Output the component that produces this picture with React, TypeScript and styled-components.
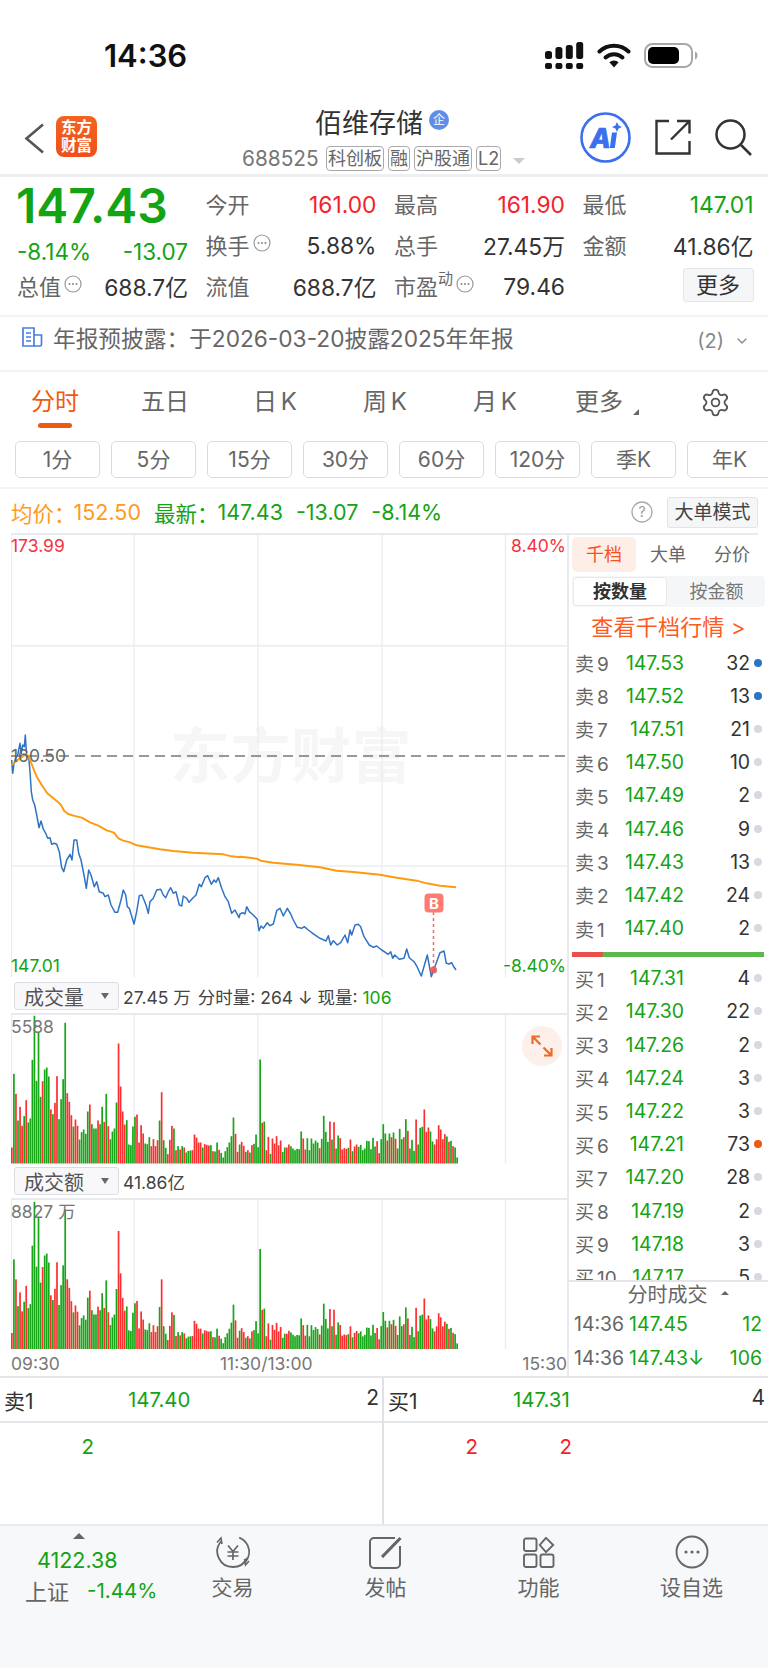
import React from "react";
import styled, { createGlobalStyle } from "styled-components";
import { Settings, ChevronDown } from "lucide-react";

const FONT = `"Inter", "Noto Sans CJK SC", sans-serif`;
const GREEN = "#14a314";
const RED = "#f5222d";
const ORANGE = "#ff9a1f";

const Global = createGlobalStyle`
  html, body { margin: 0; padding: 0; background: #fff; }
  body { width: 768px; height: 1669px; overflow: hidden; font-family: ${FONT}; color: #333; }
  * { box-sizing: border-box; }
`;

const Page = styled.div`
  width: 768px;
  height: 1669px;
  overflow: hidden;
  display: flex;
  flex-direction: column;
  background: #fff;
`;

/* ---------- status bar ---------- */
const StatusBar = styled.div`
  height: 100px;
  padding: 38px 70px 0 104px;
  display: flex;
  justify-content: space-between;
  align-items: flex-start;
`;
const Clock = styled.div`
  font-size: 31px;
  line-height: 36px;
  font-weight: 600;
  color: #111;
`;
const StatusIcons = styled.div`
  display: flex;
  align-items: center;
  gap: 13px;
  margin-top: 4px;
`;

/* ---------- header ---------- */
const Header = styled.header`
  height: 77px;
  border-bottom: 3px solid #eeeff1;
  display: flex;
  padding-left: 24px;
  position: relative;
`;
const BackLogo = styled.div`
  width: 219px;
  display: flex;
  align-items: flex-start;
  padding-top: 16px;
`;
const Logo = styled.div`
  width: 41px;
  height: 41px;
  margin-left: 12px;
  border-radius: 8px;
  background: linear-gradient(180deg, #f3641f, #ef4f1c);
  color: #fff;
  font-size: 15.5px;
  font-weight: 700;
  line-height: 18px;
  text-align: center;
  padding-top: 3px;
`;
const TitleBlock = styled.div`
  width: 300px;
  display: flex;
  flex-direction: column;
`;
const TitleLine = styled.div`
  height: 38px;
  padding: 5px 0 0 72px;
  display: flex;
  align-items: center;
  gap: 6px;
  font-size: 27px;
  color: #333;
`;
const CorpBadge = styled.span`
  width: 20px;
  height: 20px;
  border-radius: 50%;
  background: #5d8fe8;
  color: #fff;
  font-size: 12px;
  line-height: 20px;
  text-align: center;
  margin-top: -3px;
`;
const CodeLine = styled.div`
  display: flex;
  align-items: center;
  gap: 4px;
  margin-top: 8px;
`;
const Code = styled.span`
  font-size: 20.8px;
  color: #777;
  width: 80px;
  margin-left: -1px;
  flex: none;
`;
const Tag = styled.span`
  height: 25px;
  padding: 0 1px;
  min-width: 22px;
  border: 1px solid #aaa;
  border-radius: 4px;
  font-size: 18px;
  line-height: 23px;
  color: #666;
  text-align: center;
`;
const CaretDown = styled.span`
  width: 0;
  height: 0;
  margin-left: 8px;
  margin-top: 4px;
  border-left: 6px solid transparent;
  border-right: 6px solid transparent;
  border-top: 6px solid #ccc;
`;
const HeaderActions = styled.div`
  margin-left: auto;
  display: flex;
  align-items: flex-start;
  padding: 12px 16px 0 0;
  gap: 24px;
`;
const IconSlot = styled.div<{ $top?: number }>`
  margin-top: ${(p) => p.$top ?? 0}px;
  display: flex;
`;

/* ---------- quote ---------- */
const Quote = styled.section`
  height: 140px;
  padding: 6px 15px 0 17px;
  border-bottom: 2px solid #f4f4f5;
  display: grid;
  grid-template-columns: repeat(4, 171px);
  column-gap: 17.5px;
  grid-template-rows: 42px 41px 41px;
`;
const PriceBig = styled.div`
  font-size: 48px;
  font-weight: 600;
  color: ${GREEN};
  line-height: 46px;
  margin-left: -1px;
  white-space: nowrap;
`;
const ChangeRow = styled.div`
  display: flex;
  justify-content: space-between;
  align-items: center;
  font-size: 22.5px;
  color: ${GREEN};
  padding-top: 12px;
`;
const Stat = styled.div`
  display: flex;
  justify-content: space-between;
  align-items: center;
`;
const StatLabel = styled.span`
  display: inline-flex;
  align-items: center;
  font-size: 22px;
  color: #666;
  margin-top: -3px;
`;
const Sup = styled.sup`
  font-size: 15px;
  line-height: 1;
  margin-top: -14px;
  vertical-align: top;
`;
const StatValue = styled.span<{ $tone?: string }>`
  font-size: 22.8px;
  color: ${(p) => p.$tone ?? "#333"};
`;
const InfoDot = styled.svg`
  margin: -2px 0 0 3px;
`;
const MoreButton = styled.button`
  justify-self: end;
  align-self: start;
  width: 71px;
  height: 34px;
  margin-top: 2px;
  font: inherit;
  font-size: 22px;
  line-height: 30px;
  padding: 0;
  color: #333;
  background: #f5f6f8;
  border: 1px solid #e4e6ea;
  border-radius: 3px;
`;

/* ---------- notice ---------- */
const Notice = styled.div`
  height: 56px;
  padding: 0 18px 12px 22px;
  border-bottom: 2px solid #f4f4f5;
  display: flex;
  align-items: center;
  margin-top: -1px;
`;
const NoticeText = styled.div`
  margin-left: 10px;
  font-size: 22.7px;
  color: #666;
  flex: 1;
  white-space: nowrap;
`;
const NoticeCount = styled.span`
  font-size: 20px;
  color: #888;
  margin: 8px 10px 0 0;
`;
const NoticeChevron = styled.span`
  display: flex;
  margin-top: 8px;
`;

/* ---------- tabs ---------- */
const Tabs = styled.nav`
  height: 67px;
  display: grid;
  grid-template-columns: repeat(7, 110px);
`;
const Tab = styled.div<{ $active?: boolean; $shift?: number }>`
  display: flex;
  flex-direction: column;
  align-items: center;
  padding: 15px ${(p) => p.$shift ?? 0}px 0 0;
  font-size: 24px;
  line-height: 30px;
  word-spacing: -3px;
  color: ${(p) => (p.$active ? "#ee5a0f" : "#666")};
  position: relative;
`;
const TabUnderline = styled.span`
  width: 34px;
  height: 5px;
  margin-top: 6px;
  border-radius: 3px;
  background: #ee5a0f;
`;
const MoreTriangle = styled.span`
  position: absolute;
  right: 21px;
  top: 37px;
  width: 0;
  height: 0;
  border-left: 6px solid transparent;
  border-bottom: 6px solid #666;
`;

/* ---------- period row ---------- */
const PeriodRow = styled.div`
  height: 50px;
  padding: 2px 0 0 15px;
  display: flex;
  gap: 11px;
  overflow: hidden;
  border-bottom: 2px solid #f4f4f5;
`;
const PeriodButton = styled.div`
  flex: 0 0 85px;
  height: 37px;
  border: 1px solid #dcdcdc;
  border-radius: 5px;
  font-size: 21px;
  line-height: 35px;
  text-align: center;
  color: #666;
`;

/* ---------- legend ---------- */
const Legend = styled.div`
  height: 44px;
  padding: 2px 10px 0 11px;
  display: flex;
  align-items: center;
  font-size: 21.5px;
  white-space: nowrap;
`;
const LegendText = styled.span<{ $tone: string; $gap?: number }>`
  color: ${(p) => p.$tone};
  margin-left: ${(p) => p.$gap ?? 0}px;
`;
const ModeButton = styled.div`
  width: 91px;
  height: 31px;
  margin: 0 0 0 14px;
  background: #f5f6f8;
  border: 1px solid #e2e4e8;
  border-radius: 3px;
  font-size: 19px;
  line-height: 29px;
  text-align: center;
  color: #444;
`;
const Spacer = styled.div`
  flex: 1;
`;

/* ---------- main area ---------- */
const Main = styled.div`
  height: 845px;
  display: grid;
  grid-template-columns: 568px 200px;
  border-bottom: 2px solid #e4e6eb;
`;
const ChartColumn = styled.div`
  padding-left: 11px;
  display: flex;
  flex-direction: column;
`;
const ChartFrame = styled.div<{ $height: number }>`
  height: ${(p) => p.$height}px;
  position: relative;
  border-top: 2px solid #e8eaee;
  flex: none;
`;
const ChartSvg = styled.svg`
  display: block;
  position: absolute;
  left: 0;
  top: 0;
`;
const Watermark = styled.div`
  position: absolute;
  left: 159px;
  top: 186px;
  font-size: 60px;
  line-height: 70px;
  font-weight: 700;
  color: #f6f6f7;
  white-space: nowrap;
  letter-spacing: 0.5px;
`;
const AxisLabel = styled.span<{ $tone: string; $right?: number; $left?: number; $top: number }>`
  position: absolute;
  top: ${(p) => p.$top}px;
  ${(p) => (p.$right !== undefined ? `right: ${p.$right}px;` : `left: ${p.$left ?? 0}px;`)}
  font-size: 17.5px;
  line-height: 22px;
  color: ${(p) => p.$tone};
`;
const SubHeader = styled.div`
  height: 34px;
  flex: none;
  margin-left: -11px;
  padding-left: 14px;
  display: flex;
  align-items: center;
  font-size: 17.5px;
  color: #444;
`;
const Selector = styled.div`
  width: 105px;
  height: 28px;
  padding: 0 9px;
  display: flex;
  align-items: center;
  justify-content: space-between;
  background: #f8f8fa;
  border: 1px solid #dcdde2;
  border-radius: 3px;
  font-size: 20px;
  color: #555;
  margin-right: 4px;
`;
const SelectorCaret = styled.span`
  width: 0;
  height: 0;
  border-left: 4px solid transparent;
  border-right: 4px solid transparent;
  border-top: 6px solid #666;
`;
const SubInfo = styled.span`
  margin-left: 7px;
  white-space: nowrap;
`;
const GreenNum = styled.span`
  color: ${GREEN};
`;
const ExpandBadge = styled.div`
  position: absolute;
  left: 511px;
  top: 11px;
  width: 40px;
  height: 40px;
  border-radius: 50%;
  background: #fdf0ea;
  display: flex;
  align-items: center;
  justify-content: center;
`;
const TimeAxis = styled.div`
  flex: 1;
  display: grid;
  grid-template-columns: 209px 1fr auto;
  align-items: center;
  padding-right: 1px;
  font-size: 17.5px;
  color: #777;
`;

/* ---------- order book ---------- */
const BookColumn = styled.aside`
  border-left: 2px solid #e8eaee;
  margin-left: -1px;
  display: flex;
  flex-direction: column;
  position: relative;
  padding-top: 4px;
`;
const BookTop = styled.div`
  position: absolute;
  left: 0;
  top: 0;
  width: 189px;
  height: 2px;
  background: #e8eaee;
`;
const BookTabs = styled.div`
  height: 35px;
  padding-left: 3px;
  display: grid;
  grid-template-columns: 64px 64px 64px;
  font-size: 18px;
  line-height: 35px;
  text-align: center;
  color: #666;
`;
const BookTab = styled.div<{ $active?: boolean }>`
  border-radius: 5px;
  background: ${(p) => (p.$active ? "#fdeee8" : "transparent")};
  color: ${(p) => (p.$active ? "#f4511e" : "#666")};
`;
const Segment = styled.div`
  margin: 4px 3px 0;
  height: 31px;
  border-radius: 4px;
  background: #f5f6f8;
  display: grid;
  grid-template-columns: 96px 1fr;
  font-size: 18px;
  line-height: 29px;
  text-align: center;
`;
const SegmentItem = styled.div<{ $active?: boolean }>`
  margin: 1px;
  border-radius: 4px;
  background: ${(p) => (p.$active ? "#fff" : "transparent")};
  border: ${(p) => (p.$active ? "1px solid #e8e9ec" : "0")};
  color: ${(p) => (p.$active ? "#333" : "#777")};
  font-weight: ${(p) => (p.$active ? 700 : 400)};
  line-height: ${(p) => (p.$active ? 27 : 29)}px;
`;
const DeepLink = styled.div`
  height: 39px;
  padding-top: 1px;
  font-size: 22px;
  line-height: 39px;
  text-align: center;
  color: #ff5a1f;
  letter-spacing: 0.2px;
`;
const BookScroll = styled.div`
  height: 634px;
  overflow: hidden;
  flex: none;
`;
const BookRow = styled.div`
  height: 33.2px;
  padding-left: 6px;
  display: grid;
  grid-template-columns: 45px 64px 66px 8px;
  align-items: center;
  font-size: 19.4px;
`;
const BookLabel = styled.span`
  color: #666;
  font-size: 19px;
  white-space: nowrap;
`;
const BookNum = styled.span`
  margin-left: 3px;
`;
const BookPrice = styled.span`
  color: ${GREEN};
  text-align: right;
  margin-left: -6px;
`;
const BookQty = styled.span`
  color: #333;
  text-align: right;
`;
const BookDot = styled.span<{ $tone: string }>`
  width: 8px;
  height: 8px;
  margin-left: 4px;
  border-radius: 50%;
  background: ${(p) => p.$tone};
`;
const RatioBar = styled.div`
  height: 5px;
  margin: 7px 4px 5px 3px;
  background: linear-gradient(100deg, #e85050 0 16%, #5cb94e 16.4% 100%);
`;
const TradesHead = styled.div`
  height: 27px;
  border-top: 2px solid #e4e6eb;
  margin-left: -1px;
  display: flex;
  align-items: center;
  justify-content: center;
  font-size: 20px;
  color: #666;
  gap: 13px;
  padding: 0 0 3px 20px;
  flex: none;
`;
const SmallUp = styled.span`
  width: 0;
  height: 0;
  border-left: 4px solid transparent;
  border-right: 4px solid transparent;
  border-bottom: 4px solid #666;
`;
const TradeRow = styled.div`
  height: 34px;
  padding: 0 6px 0 5px;
  display: flex;
  align-items: center;
  font-size: 19.4px;
  color: ${GREEN};
  flex: none;
`;
const TradeTime = styled.span`
  width: 55px;
  color: #666;
`;
const TradeQty = styled.span`
  margin-left: auto;
`;

/* ---------- depth summary ---------- */
const Depth = styled.div`
  height: 146px;
  display: grid;
  grid-template-columns: 384px 384px;
  flex: none;
`;
const DepthColumn = styled.div<{ $divider?: boolean }>`
  border-right: ${(p) => (p.$divider ? "2px solid #dfe1e6" : "0")};
  display: flex;
  flex-direction: column;
`;
const DepthHead = styled.div`
  height: 45px;
  flex: none;
  border-bottom: 2px solid #e4e6eb;
  display: flex;
  align-items: center;
  padding: 0 3px 0 4px;
  font-size: 20.4px;
  color: #333;
`;
const DepthLabel = styled.span<{ $width: number }>`
  width: ${(p) => p.$width}px;
  font-size: 21px;
`;
const DepthPrice = styled.span`
  color: ${GREEN};
`;
const DepthQty = styled.span`
  margin: -4px 0 0 auto;
  font-size: 21px;
`;
const DepthCells = styled.div`
  display: grid;
  grid-template-columns: repeat(4, 94px);
  font-size: 20.5px;
  line-height: 48px;
  text-align: right;
`;
const DepthCell = styled.span<{ $tone: string }>`
  color: ${(p) => p.$tone};
`;

/* ---------- footer ---------- */
const Footer = styled.footer`
  height: 144px;
  flex: none;
  background: #f7f8fa;
  border-top: 2px solid #e9eaed;
  display: grid;
  grid-template-columns: 156px repeat(4, 153px);
`;
const IndexBox = styled.div`
  display: flex;
  flex-direction: column;
  align-items: flex-start;
  padding: 7px 0 0 25px;
`;
const IndexCaret = styled.span`
  width: 0;
  height: 0;
  margin-left: 48px;
  border-left: 6px solid transparent;
  border-right: 6px solid transparent;
  border-bottom: 6px solid #666;
`;
const IndexValue = styled.div`
  font-size: 21.5px;
  line-height: 30px;
  margin: 6px 0 0 12px;
  color: ${GREEN};
`;
const IndexLine = styled.div`
  display: flex;
  align-items: center;
  gap: 18px;
  font-size: 22px;
  color: #666;
  height: 30px;
  white-space: nowrap;
`;
const IndexChange = styled.span`
  color: ${GREEN};
  font-size: 20.5px;
`;
const FootItem = styled.div`
  display: flex;
  flex-direction: column;
  align-items: center;
  padding-top: 9px;
  font-size: 21px;
  color: #666;
`;
const FootIconBox = styled.div`
  height: 34px;
  display: flex;
  align-items: center;
`;
const FootLabel = styled.span`
  margin-top: 4px;
  line-height: 30px;
`;

/* ---------- data ---------- */
const conv = (pts: number[][], ox: number, oy: number) => pts.map(([a, b]) => [ox + a / 3, oy + b / 3]);
const toPath = (pts: number[][]) => pts.map((p, i) => `${i ? "L" : "M"}${p[0].toFixed(1)} ${p[1].toFixed(1)}`).join("");

const blue = [
  ...conv([[5,105],[8,145],[12,115],[17,100],[23,90],[30,55],[34,85],[38,60],[43,65],[46,30],[50,95],[56,95],[60,140],[64,200],[68,225],[74,240],[80,270],[87,308],[93,288],[100,312],[107,325],[113,340],[120,338],[125,358],[133,355],[140,358],[148,380],[155,428],[161,440],[170,405],[180,388],[186,405],[192,345],[200,345],[206,385],[213,405],[222,450],[229,490],[236,435],[243,450],[253,485],[260,470],[268,500],[280,505],[285,515],[295,510],[303,540],[315,562],[323,562],[333,525],[340,495],[347,510],[352,545],[358,550],[372,597],[380,560],[388,512],[396,510],[408,540],[415,565],[420,530],[430,520],[440,495],[452,493],[460,510],[467,518],[475,500],[482,488],[490,505],[498,500],[508,540],[515,543],[520,513],[530,520],[537,532],[548,520],[558,510],[568,478],[574,485],[585,458],[593,452],[604,478],[612,465],[618,472],[625,458],[635,490],[645,515],[655,530],[665,565],[675,555],[687,578]], 10, 725),
  ...conv([[0,222],[8,218],[15,222],[20,200],[28,215],[40,225],[52,238],[57,272],[63,258],[70,265],[82,248],[90,257],[100,252],[110,212],[120,205],[130,228],[142,205],[152,222],[160,240],[172,262],[185,265],[193,260],[205,270],[218,280],[232,290],[240,295],[258,303],[265,287],[272,315],[280,302],[292,315],[302,308],[315,285],[323,308],[330,270],[335,285],[345,255],[355,253],[362,260],[372,290],[388,315],[400,322],[410,318],[425,330],[445,343],[452,335],[458,355],[464,345],[478,358],[492,355],[500,327],[508,353],[522,365],[530,378],[544,408],[562,345],[574,410],[590,365],[600,338],[612,333],[619,370],[627,372],[635,368],[640,378],[648,390]], 240, 840),
];
const orange = [
  ...conv([[5,120],[15,112],[30,100],[45,90],[55,92],[62,110],[70,130],[80,155],[95,180],[112,205],[130,220],[145,232],[153,240],[163,258],[175,267],[190,272],[215,278],[240,292],[265,302],[290,316],[312,323],[325,340],[340,347],[360,352],[380,361],[410,366],[450,373],[490,378],[550,383],[640,388],[665,394],[690,397]], 10, 725),
  ...conv([[0,50],[30,53],[50,56],[62,62],[100,68],[170,74],[240,82],[290,92],[340,96],[420,104],[470,113],[530,122],[560,130],[600,137],[648,142]], 240, 840),
];

const barSpec =
  "r397 g176 r236 g316 r275 r332 g303 r255 g322 g310 g134 g2 g197 g50 g245 r198 g163 g157 g184 r283 g297 r263 r183 g312 g252 g192 g23 r234 r260 r300 g334 r313 r332 g373 g351 g343 g356 g289 r268 g327 g340 g340 r316 g327 g275 r320 g236 r333 g372 g349 g340 g262 r85 r214 r289 r328 g315 g388 g390 g334 g305 r298 r382 r330 r355 g385 g387 g366 r393 r372 r393 r375 g316 r231 g375 g398 r417 r374 r332 g340 r405 g393 r403 g393 r397 g412 g407 g406 r405 r358 r367 r382 r382 g397 r387 r389 r391 g390 r408 g409 g382 r404 g413 g427 g408 g396 g382 g363 g307 r356 r410 g388 " +
  "r380 r392 g410 r405 g412 r390 g386 g358 g396 g133 r323 g319 r405 r365 g416 r370 r385 r363 r390 r376 g410 g397 r397 r388 g393 g400 g405 g401 g402 g349 r370 r403 g369 g405 g370 g385 g376 g382 r399 g371 g302 g350 g380 r319 g373 r321 g400 g361 r369 r403 r399 r401 g398 r373 g408 r394 r388 g395 g389 g405 g400 g377 g378 g402 g368 g394 r378 r414 g372 g327 g355 r376 g355 r366 g352 r371 g400 g341 g372 r366 g312 r347 g400 g374 g407 r313 g388 g338 g335 r283 r350 r337 g349 g379 r388 r372 r330 r343 r372 r357 g364 r380 g377 r393 g397 g427";
const bars = barSpec.split(" ").map((s) => ({ red: s[0] === "r", h: (445 - Number(s.slice(1))) / 3 }));
const pitch = (457 - 11.7) / (bars.length - 1);

const vGrid = [134, 258, 382, 505.5];

const sells = [
  ["9", "147.53", "32", "#2f74c4"],
  ["8", "147.52", "13", "#2f74c4"],
  ["7", "147.51", "21", "#d6d9e0"],
  ["6", "147.50", "10", "#d6d9e0"],
  ["5", "147.49", "2", "#d6d9e0"],
  ["4", "147.46", "9", "#d6d9e0"],
  ["3", "147.43", "13", "#d6d9e0"],
  ["2", "147.42", "24", "#d6d9e0"],
  ["1", "147.40", "2", "#d6d9e0"],
];
const buys = [
  ["1", "147.31", "4", "#d6d9e0"],
  ["2", "147.30", "22", "#d6d9e0"],
  ["3", "147.26", "2", "#d6d9e0"],
  ["4", "147.24", "3", "#d6d9e0"],
  ["5", "147.22", "3", "#d6d9e0"],
  ["6", "147.21", "73", "#ee5a0f"],
  ["7", "147.20", "28", "#d6d9e0"],
  ["8", "147.19", "2", "#d6d9e0"],
  ["9", "147.18", "3", "#d6d9e0"],
  ["10", "147.17", "5", "#d6d9e0"],
];

/* ---------- drawings ---------- */
const SignalIcon = () => (
  <svg width="39" height="27" viewBox="0 0 39 27">
    {[0, 10.4, 20.8, 31.2].map((x, i) => (
      <g key={x} fill="#111">
        <rect x={x} y={21} width="7" height="6" rx="2" />
        <rect x={x} y={[9, 5, 3, 0][i]} width="7" height={[8, 12, 14, 17][i]} rx="2.5" />
      </g>
    ))}
  </svg>
);
const WifiIcon = () => (
  <svg width="34" height="25" viewBox="0 0 34 25" fill="none" stroke="#111" strokeWidth="4" strokeLinecap="round">
    <path d="M2.5 8.5a21 21 0 0 1 29 0" />
    <path d="M8.5 14.5a12.5 12.5 0 0 1 17 0" />
    <path d="M17 24.5l-4.6-5.2a6.8 6.8 0 0 1 9.2 0z" fill="#111" stroke="none" />
  </svg>
);
const BatteryIcon = () => (
  <svg width="54" height="25" viewBox="0 0 54 25">
    <rect x="1" y="1" width="47" height="23" rx="7.5" fill="none" stroke="#a8a8a8" strokeWidth="2" />
    <rect x="4" y="4" width="31" height="17" rx="5" fill="#000" />
    <path d="M51 8.5c1.6.5 2.5 2 2.5 4s-.9 3.5-2.5 4z" fill="#a8a8a8" />
  </svg>
);
const BackIcon = () => (
  <svg width="20" height="31" viewBox="0 0 20 31" fill="none" stroke="#555" strokeWidth="2.6">
    <path d="M19 1.5L2.5 15.5L19 29.5" />
  </svg>
);
const AiIcon = () => (
  <svg width="51" height="51" viewBox="0 0 51 51">
    <circle cx="25.5" cy="25.5" r="24" fill="#fff" stroke="#3a6ff0" strokeWidth="2.6" />
    <text x="10" y="36" fontFamily="Inter" fontSize="27" fontWeight="800" fontStyle="italic" fill="#3a6ff0" stroke="#3a6ff0" strokeWidth="0.7">
      A
    </text>
    <path d="M32 20.5h5l-2.2 15.5h-5z" fill="#3a6ff0" />
    <path d="M37 10l1.6 3.4 3.4 1.6-3.4 1.6-1.6 3.4-1.6-3.4-3.4-1.6 3.4-1.6z" fill="#3a6ff0" />
  </svg>
);
const ShareIcon = () => (
  <svg width="36" height="36" viewBox="0 0 36 36" fill="none" stroke="#333" strokeWidth="2.4">
    <path d="M14 2H1.5v32.5h33V22" />
    <path d="M16 20.5L34 2.5M22 2h12.5v12.5" />
  </svg>
);
const SearchIcon = () => (
  <svg width="37" height="37" viewBox="0 0 37 37" fill="none" stroke="#333" strokeWidth="2.5">
    <circle cx="15.5" cy="15.5" r="14" />
    <path d="M26 26l10 10" />
  </svg>
);
const Dots = ({ size = 18 }: { size?: number }) => (
  <InfoDot width={size} height={size} viewBox="0 0 18 18">
    <circle cx="9" cy="9" r="8" fill="none" stroke="#999" strokeWidth="1.2" />
    <circle cx="5.5" cy="9" r="1" fill="#888" />
    <circle cx="9" cy="9" r="1" fill="#888" />
    <circle cx="12.5" cy="9" r="1" fill="#888" />
  </InfoDot>
);
const DocIcon = () => (
  <svg width="21" height="20" viewBox="0 0 21 20" fill="none" stroke="#4a7fe0" strokeWidth="1.7">
    <path d="M1 1h11v18H1z" />
    <path d="M12 8h7.5v9.5a1.5 1.5 0 0 1-1.5 1.5h-6" />
    <path d="M4 6h5M4 10h5M4 14h5" strokeWidth="1.5" />
  </svg>
);
const HelpIcon = () => (
  <svg width="22" height="22" viewBox="0 0 22 22" fill="none">
    <circle cx="11" cy="11" r="10" stroke="#aaa" strokeWidth="1.3" />
    <text x="11" y="16" textAnchor="middle" fontFamily="Inter" fontSize="14" fill="#999">?</text>
  </svg>
);
const ExpandIcon = () => (
  <svg width="22" height="22" viewBox="0 0 22 22" fill="none" stroke="#f06a25" strokeWidth="2.2">
    <path d="M1.5 9V1.5H9M2 2l7.5 7.5" />
    <path d="M20.5 13v7.5H13M20 20l-7.5-7.5" />
  </svg>
);
const TradeIcon = () => (
  <svg width="38" height="34" viewBox="0 0 38 34" fill="none" stroke="#666" strokeWidth="1.8">
    <path d="M7 6.5A15.5 15.5 0 0 0 19 32a15.5 15.5 0 0 0 14-9" />
    <path d="M31 27.5A15.5 15.5 0 0 0 19 1.5a15.5 15.5 0 0 0-11 4.5" strokeDasharray="30 60" />
    <path d="M3 7.5L7 3l1 6M35 26l-3.5 4-1-6" strokeWidth="1.6" />
    <path d="M14 10.5l5 6 5-6M13.5 17h11M13.5 21h11M19 16.5V25" strokeWidth="1.7" />
  </svg>
);
const PostIcon = () => (
  <svg width="33" height="33" viewBox="0 0 33 33" fill="none" stroke="#666" strokeWidth="2">
    <path d="M26 2H5a4 4 0 0 0-4 4v22a4 4 0 0 0 4 4h22a4 4 0 0 0 4-4V10" />
    <path d="M31.5 2L14 20l-1 1" strokeWidth="3.2" />
  </svg>
);
const FuncIcon = () => (
  <svg width="32" height="31" viewBox="0 0 32 31" fill="none" stroke="#666" strokeWidth="1.9">
    <rect x="1" y="1.5" width="12.5" height="12.5" rx="2" />
    <rect x="1" y="17.5" width="12.5" height="12.5" rx="2" />
    <rect x="17.5" y="17.5" width="13" height="12.5" rx="2" />
    <path d="M23 .8l7.2 7.2-7.2 7.2L16.8 8z" />
  </svg>
);
const WatchIcon = () => (
  <svg width="34" height="34" viewBox="0 0 34 34" fill="none">
    <circle cx="17" cy="17" r="15.5" stroke="#666" strokeWidth="1.9" />
    <circle cx="11" cy="17" r="1.6" fill="#666" />
    <circle cx="17" cy="17" r="1.6" fill="#666" />
    <circle cx="23" cy="17" r="1.6" fill="#666" />
  </svg>
);

const GridLines = ({ y0, y1 }: { y0: number; y1: number }) => (
  <g stroke="#eaecf2" strokeWidth="1.3">
    <line x1={11.5} x2={11.5} y1={y0} y2={y1} />
    {vGrid.map((x) => (
      <line key={x} x1={x} x2={x} y1={y0} y2={y1} />
    ))}
  </g>
);

const Bars = ({ base, decay }: { base: number; decay: number }) => (
  <g>
    {bars.map((b, i) => {
      const h = b.h * (1 - (decay * i) / bars.length);
      return (
        <rect
          key={i}
          x={11 + i * pitch}
          y={base - h}
          width={1.7}
          height={h}
          fill={b.red ? "#fb2f2f" : "#18a618"}
        />
      );
    })}
  </g>
);

const Book = ({ kind, rows }: { kind: string; rows: string[][] }) => (
  <>
    {rows.map((r) => (
      <BookRow key={r[0]}>
        <BookLabel>
          {kind}
          <BookNum>{r[0]}</BookNum>
        </BookLabel>
        <BookPrice>{r[1]}</BookPrice>
        <BookQty>{r[2]}</BookQty>
        <BookDot $tone={r[3]} />
      </BookRow>
    ))}
  </>
);

export default function App() {
  return (
    <Page>
      <Global />
      <StatusBar>
        <Clock>14:36</Clock>
        <StatusIcons>
          <SignalIcon />
          <WifiIcon />
          <BatteryIcon />
        </StatusIcons>
      </StatusBar>

      <Header>
        <BackLogo>
          <IconSlot $top={7}>
            <BackIcon />
          </IconSlot>
          <Logo>
            东方
            <br />
            财富
          </Logo>
        </BackLogo>
        <TitleBlock>
          <TitleLine>
            佰维存储
            <CorpBadge>企</CorpBadge>
          </TitleLine>
          <CodeLine>
            <Code>688525</Code>
            <Tag>科创板</Tag>
            <Tag>融</Tag>
            <Tag>沪股通</Tag>
            <Tag>L2</Tag>
            <CaretDown />
          </CodeLine>
        </TitleBlock>
        <HeaderActions>
          <AiIcon />
          <IconSlot $top={7}>
            <ShareIcon />
          </IconSlot>
          <IconSlot $top={7}>
            <SearchIcon />
          </IconSlot>
        </HeaderActions>
      </Header>

      <Quote>
        <PriceBig>147.43</PriceBig>
        <Stat>
          <StatLabel>今开</StatLabel>
          <StatValue $tone={RED}>161.00</StatValue>
        </Stat>
        <Stat>
          <StatLabel>最高</StatLabel>
          <StatValue $tone={RED}>161.90</StatValue>
        </Stat>
        <Stat>
          <StatLabel>最低</StatLabel>
          <StatValue $tone={GREEN}>147.01</StatValue>
        </Stat>
        <ChangeRow>
          <span>-8.14%</span>
          <span>-13.07</span>
        </ChangeRow>
        <Stat>
          <StatLabel>
            换手
            <Dots />
          </StatLabel>
          <StatValue>5.88%</StatValue>
        </Stat>
        <Stat>
          <StatLabel>总手</StatLabel>
          <StatValue>27.45万</StatValue>
        </Stat>
        <Stat>
          <StatLabel>金额</StatLabel>
          <StatValue>41.86亿</StatValue>
        </Stat>
        <Stat>
          <StatLabel>
            总值
            <Dots />
          </StatLabel>
          <StatValue>688.7亿</StatValue>
        </Stat>
        <Stat>
          <StatLabel>流值</StatLabel>
          <StatValue>688.7亿</StatValue>
        </Stat>
        <Stat>
          <StatLabel>
            市盈<Sup>动</Sup>
            <Dots />
          </StatLabel>
          <StatValue>79.46</StatValue>
        </Stat>
        <MoreButton>更多</MoreButton>
      </Quote>

      <Notice>
        <DocIcon />
        <NoticeText>年报预披露：于2026-03-20披露2025年年报</NoticeText>
        <NoticeCount>(2)</NoticeCount>
        <NoticeChevron>
          <ChevronDown size={16} color="#888" />
        </NoticeChevron>
      </Notice>

      <Tabs>
        <Tab $active>
          分时
          <TabUnderline />
        </Tab>
        <Tab>五日</Tab>
        <Tab>日 K</Tab>
        <Tab>周 K</Tab>
        <Tab>月 K</Tab>
        <Tab $shift={12}>
          更多
          <MoreTriangle />
        </Tab>
        <Tab>
          <Settings size={31} color="#555" strokeWidth={1.4} />
        </Tab>
      </Tabs>

      <PeriodRow>
        {["1分", "5分", "15分", "30分", "60分", "120分", "季K", "年K"].map((t) => (
          <PeriodButton key={t}>{t}</PeriodButton>
        ))}
      </PeriodRow>

      <Legend>
        <LegendText $tone={ORANGE}>均价：</LegendText>
        <LegendText $tone={ORANGE} $gap={-2}>152.50</LegendText>
        <LegendText $tone={GREEN} $gap={13}>最新：</LegendText>
        <LegendText $tone={GREEN} $gap={-1}>147.43</LegendText>
        <LegendText $tone={GREEN} $gap={13}>-13.07</LegendText>
        <LegendText $tone={GREEN} $gap={13}>-8.14%</LegendText>
        <Spacer />
        <HelpIcon />
        <ModeButton>大单模式</ModeButton>
      </Legend>

      <Main>
        <ChartColumn>
          <ChartFrame $height={446}>
            <Watermark>东方财富</Watermark>
            <ChartSvg width={557} height={444} viewBox="11 535 557 444">
              <GridLines y0={535} y1={977} />
              <g stroke="#eaecf2" strokeWidth="1.4">
                <line x1={11} x2={568} y1={645.7} y2={645.7} />
                <line x1={11} x2={568} y1={866} y2={866} />
              </g>
              <line x1={11} x2={568} y1={756} y2={756} stroke="#777" strokeWidth="1.6" strokeDasharray="10 6" />
              <path d={toPath(blue)} fill="none" stroke="#2f74c4" strokeWidth="1.5" strokeLinejoin="round" />
              <path d={toPath(orange)} fill="none" stroke="#ff9a0f" strokeWidth="1.9" strokeLinejoin="round" />
              <line x1={433.5} x2={433.5} y1={912} y2={968} stroke="#f46a6a" strokeWidth="1.5" strokeDasharray="3 3" />
              <circle cx={433.5} cy={970} r={3.6} fill="#e85a5a" opacity="0.9" />
              <rect x={424.5} y={893.5} width={19} height={19} rx={4} fill="#ff7b72" />
              <text x={434} y={909} textAnchor="middle" fontFamily="Inter" fontSize="15" fontWeight="700" fill="#fff">
                B
              </text>
            </ChartSvg>
            <AxisLabel $tone="#f5333f" $left={0} $top={0}>173.99</AxisLabel>
            <AxisLabel $tone="#f5333f" $right={2} $top={0}>8.40%</AxisLabel>
            <AxisLabel $tone="#666" $left={0} $top={210}>160.50</AxisLabel>
            <AxisLabel $tone={GREEN} $left={0} $top={420}>147.01</AxisLabel>
            <AxisLabel $tone={GREEN} $right={2} $top={420}>-8.40%</AxisLabel>
          </ChartFrame>

          <SubHeader>
            <Selector>
              成交量
              <SelectorCaret />
            </Selector>
            27.45 万
            <SubInfo>分时量: 264 ↓ 现量: <GreenNum>106</GreenNum></SubInfo>
          </SubHeader>
          <ChartFrame $height={151}>
            <ChartSvg width={557} height={149} viewBox="11 1015 557 149">
              <GridLines y0={1015} y1={1163.5} />
              <Bars base={1163.5} decay={0} />
            </ChartSvg>
            <AxisLabel $tone="#777" $left={0} $top={1}>5588</AxisLabel>
            <ExpandBadge>
              <ExpandIcon />
            </ExpandBadge>
          </ChartFrame>

          <SubHeader>
            <Selector>
              成交额
              <SelectorCaret />
            </Selector>
            41.86亿
          </SubHeader>
          <ChartFrame $height={152}>
            <ChartSvg width={557} height={150} viewBox="11 1200 557 150">
              <GridLines y0={1200} y1={1349} />
              <Bars base={1349} decay={0.07} />
            </ChartSvg>
            <AxisLabel $tone="#777" $left={0} $top={1}>8827 万</AxisLabel>
          </ChartFrame>
          <TimeAxis>
            <span>09:30</span>
            <span>11:30/13:00</span>
            <span>15:30</span>
          </TimeAxis>
        </ChartColumn>

        <BookColumn>
          <BookTop />
          <BookTabs>
            <BookTab $active>千档</BookTab>
            <BookTab>大单</BookTab>
            <BookTab>分价</BookTab>
          </BookTabs>
          <Segment>
            <SegmentItem $active>按数量</SegmentItem>
            <SegmentItem>按金额</SegmentItem>
          </Segment>
          <DeepLink>查看千档行情 &gt;</DeepLink>
          <BookScroll>
            <Book kind="卖" rows={sells} />
            <RatioBar />
            <Book kind="买" rows={buys} />
          </BookScroll>
          <TradesHead>
            分时成交
            <SmallUp />
          </TradesHead>
          <TradeRow>
            <TradeTime>14:36</TradeTime>
            <span>147.45</span>
            <TradeQty>12</TradeQty>
          </TradeRow>
          <TradeRow>
            <TradeTime>14:36</TradeTime>
            <span>147.43↓</span>
            <TradeQty>106</TradeQty>
          </TradeRow>
        </BookColumn>
      </Main>

      <Depth>
        <DepthColumn $divider>
          <DepthHead>
            <DepthLabel $width={124}>卖1</DepthLabel>
            <DepthPrice>147.40</DepthPrice>
            <DepthQty>2</DepthQty>
          </DepthHead>
          <DepthCells>
            <DepthCell $tone={GREEN}>2</DepthCell>
          </DepthCells>
        </DepthColumn>
        <DepthColumn>
          <DepthHead>
            <DepthLabel $width={125}>买1</DepthLabel>
            <DepthPrice>147.31</DepthPrice>
            <DepthQty>4</DepthQty>
          </DepthHead>
          <DepthCells>
            <DepthCell $tone={RED}>2</DepthCell>
            <DepthCell $tone={RED}>2</DepthCell>
          </DepthCells>
        </DepthColumn>
      </Depth>

      <Footer>
        <IndexBox>
          <IndexCaret />
          <IndexValue>4122.38</IndexValue>
          <IndexLine>
            上证
            <IndexChange>-1.44%</IndexChange>
          </IndexLine>
        </IndexBox>
        <FootItem>
          <FootIconBox>
            <TradeIcon />
          </FootIconBox>
          <FootLabel>交易</FootLabel>
        </FootItem>
        <FootItem>
          <FootIconBox>
            <PostIcon />
          </FootIconBox>
          <FootLabel>发帖</FootLabel>
        </FootItem>
        <FootItem>
          <FootIconBox>
            <FuncIcon />
          </FootIconBox>
          <FootLabel>功能</FootLabel>
        </FootItem>
        <FootItem>
          <FootIconBox>
            <WatchIcon />
          </FootIconBox>
          <FootLabel>设自选</FootLabel>
        </FootItem>
      </Footer>
    </Page>
  );
}
